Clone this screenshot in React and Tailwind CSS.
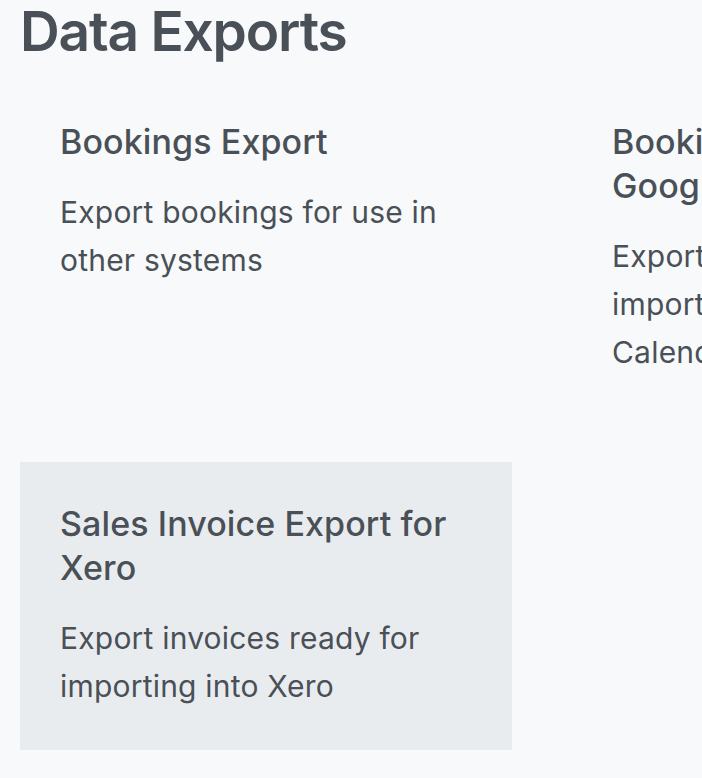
import React from 'react';

const exportsList = [
    {
        title: 'Bookings Export',
        description: 'Export bookings for use in other systems',
    },
    {
        title: 'Bookings Export for Google Calendar',
        description: 'Export bookings for importing into Google Calendar',
    },
    {
        title: 'Sales Invoice Export for Xero',
        description: 'Export invoices ready for importing into Xero',
        active: true,
    },
];

function ExportCard({ title, description, active }) {
    return (
        <a
            href="#"
            className={
                active
                    ? 'block px-[40px] pt-[40px] pb-[40px] bg-[#e9ecef]'
                    : 'block px-[40px] pt-[40px] pb-[40px] hover:bg-[#e9ecef]'
            }
        >
            <h2 className="text-[34px] leading-[44px] font-medium tracking-[0.1px]">{title}</h2>
            <p className="mt-[24px] text-[30px] leading-[48px] tracking-[0.2px]">{description}</p>
        </a>
    );
}

export default function App() {
    return (
        <div
            className="min-h-screen overflow-hidden bg-[#f8f9fa] text-[#495057] px-[20px]"
            style={{ fontFamily: 'Inter, "Noto Sans", sans-serif' }}
        >
            <h1 className="mt-[1px] text-[55px] leading-[60px] font-semibold tracking-[-1.2px]">Data Exports</h1>

            <div className="mt-[19px] grid grid-cols-[492px_492px] gap-x-[60px] gap-y-[46px]">
                {exportsList.map((item, i) => (
                    <ExportCard key={i} {...item} />
                ))}
            </div>
        </div>
    );
}
